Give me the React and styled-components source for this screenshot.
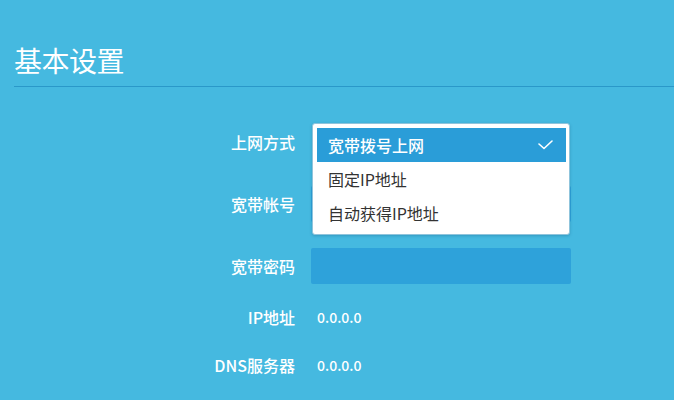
import styled, { createGlobalStyle } from 'styled-components';

const GlobalStyle = createGlobalStyle`
    html, body {
        margin: 0;
        padding: 0;
        background-color: #45b9e0;
    }
    body {
        font-family: "Noto Sans CJK SC", "Noto Sans", "Liberation Sans", sans-serif;
        color: #fff;
    }
`;

const fields = [
    { label: '上网方式', type: 'select' },
    { label: '宽带帐号', type: 'input' },
    { label: '宽带密码', type: 'input' },
    { label: 'IP地址', type: 'text', value: '0.0.0.0' },
    { label: 'DNS服务器', type: 'text', value: '0.0.0.0' },
];

const options = ['宽带拨号上网', '固定IP地址', '自动获得IP地址'];

const CheckIcon = () => (
    <svg width="15" height="10" viewBox="0 0 15 10" fill="none">
        <polyline
            points="1,4 6,8.5 14,1"
            stroke="#fff"
            strokeWidth="1.6"
            strokeLinecap="round"
            strokeLinejoin="round"
        />
    </svg>
);

const Dropdown = () => (
    <Menu>
        {options.map((item, i) => (
            <Option key={item} selected={i === 0}>
                <span>{item}</span>
                {i === 0 && <CheckIcon />}
            </Option>
        ))}
    </Menu>
);

const App = () => {
    return (
        <>
            <GlobalStyle />
            <Page>
                <Header>
                    <Title>基本设置</Title>
                </Header>
                <Form>
                    {fields.map((item) => (
                        <Row key={item.label} tall={item.type !== 'text'}>
                            <Label>{item.label}</Label>
                            {item.type === 'select' && (
                                <SelectBox>
                                    <Dropdown />
                                </SelectBox>
                            )}
                            {item.type === 'input' && <Field />}
                            {item.type === 'text' && <Value>{item.value}</Value>}
                        </Row>
                    ))}
                </Form>
            </Page>
        </>
    );
};

const Page = styled.div`
    width: 674px;
    height: 400px;
    overflow: hidden;
    padding-left: 14px;
    box-sizing: border-box;
`;

const Header = styled.div`
    padding-top: 40px;
    padding-bottom: 6px;
    border-bottom: 1px solid #2a98c9;
`;

const Title = styled.h1`
    margin: 0;
    font-size: 28px;
    line-height: 40px;
    font-weight: 400;
    letter-spacing: -0.5px;
`;

const Form = styled.div`
    display: flex;
    flex-direction: column;
    margin-top: 37px;
    gap: 26px;
`;

const Row = styled.div`
    display: grid;
    grid-template-columns: 281px 260px;
    column-gap: 16px;
    align-items: center;
    height: ${(p) => (p.tall ? '36px' : '30px')};
    margin-top: ${(p) => (p.tall ? '0' : '-8px')};
`;

const Label = styled.div`
    text-align: right;
    font-size: 16px;
    line-height: 20px;
    font-weight: 500;
`;

const SelectBox = styled.div`
    position: relative;
    height: 36px;
`;

const Menu = styled.ul`
    position: absolute;
    top: -1px;
    left: 1px;
    width: 258px;
    margin: 0;
    padding: 4px 3px 4px 4px;
    box-sizing: border-box;
    list-style: none;
    background-color: #fff;
    border: 1px solid #8fc4dc;
    border-radius: 3px;
    box-shadow: 0 1px 3px rgba(0, 60, 100, 0.25);
    z-index: 2;
`;

const Option = styled.li`
    display: flex;
    align-items: center;
    justify-content: space-between;
    height: 34px;
    padding: 0 13px 0 11px;
    font-size: 16px;
    color: ${(p) => (p.selected ? '#fff' : '#333')};
    background-color: ${(p) => (p.selected ? '#2a9dd8' : 'transparent')};
    font-weight: ${(p) => (p.selected ? 500 : 400)};
`;

const Field = styled.div`
    height: 36px;
    background-color: #2ea2da;
    border-radius: 2px;
`;

const Value = styled.div`
    padding-left: 6px;
    font-size: 14px;
    line-height: 20px;
    font-weight: 500;
`;

export default App;
